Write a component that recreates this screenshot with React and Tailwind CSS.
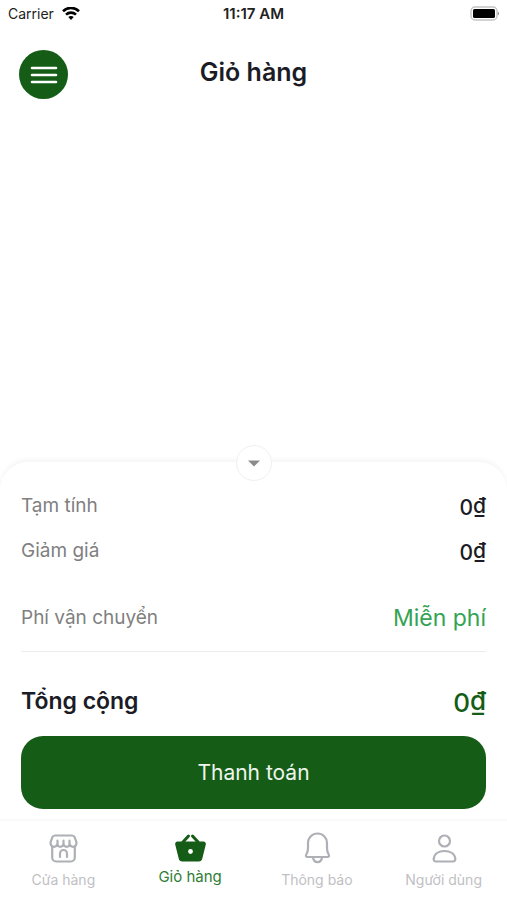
import React from "react";

function StatusBar() {
  return (
    <div className="grid h-7 grid-cols-3 items-center px-2 text-sm leading-5 text-[#222]">
      <div className="flex items-center gap-2">
        <span>Carrier</span>
        <svg width="18" height="14" viewBox="0 0 18 14" fill="none" stroke="#000" strokeWidth="2.6" aria-hidden="true">
          <path d="M1 4.2C5.5-.2 12.5-.2 17 4.2" />
          <path d="M4 7.600C6.800 4.900 11.200 4.900 14 7.600" />
          <path d="M9 13 6.300 10.100C7.800 8.600 10.200 8.600 11.700 10.100Z" fill="#000" stroke="none" />
        </svg>
      </div>
      <span className="text-center text-[15px] font-semibold">11:17 AM</span>
      <svg className="justify-self-end" width="30" height="16" viewBox="0 0 30 16" aria-hidden="true">
        <rect x="2" y="1" width="26" height="13" rx="4" fill="#fff" stroke="#c4c4c4" strokeWidth="1.4" />
        <rect x="4" y="3" width="22" height="9" rx="1.5" fill="#000" />
        <path d="M28.8 5.5v4l1.2-1v-2z" fill="#999" />
      </svg>
    </div>
  );
}

function Header() {
  return (
    <header className="grid grid-cols-[49px_1fr_49px] items-start px-[19px] pt-[22px]">
      <button type="button" aria-label="Menu" className="flex size-[49px] items-center justify-center rounded-full bg-[#155d17]">
        <svg width="28" height="20" viewBox="0 0 28 20" stroke="#fff" strokeWidth="2.6" strokeLinecap="round" aria-hidden="true">
          <path d="M2 3h24M2 10h24M2 17h24" />
        </svg>
      </button>
      <h1 className="pt-1 text-center text-[25px] leading-9 font-semibold text-[#1b1c26]">Giỏ hàng</h1>
    </header>
  );
}

function Row({ label, children }) {
  return (
    <div className="flex h-[45px] items-center justify-between">
      <dt className="text-[19px] text-[#808080]">{label}</dt>
      {children}
    </div>
  );
}

function Price({ amount }) {
  return (
    <>
      {amount}
      <span className="align-[2px]">₫</span>
    </>
  );
}

const iconProps = { width: 34, height: 34, viewBox: "0 0 34 34", fill: "none", strokeWidth: 2.2, strokeLinecap: "round", strokeLinejoin: "round", "aria-hidden": true };

function StoreIcon() {
  return (
    <svg {...iconProps} stroke="#aeb0b6">
      <path d="M6.200 15v11.500a4 4 0 0 0 4 4h14.600a4 4 0 0 0 4-4V15" />
      <path d="M9 4.500h17a3 3 0 0 1 2.700 1.800l1.700 4.700v1.500a3.400 3.400 0 0 1-6.500 1.300 3.500 3.500 0 0 1-6.400 0 3.500 3.500 0 0 1-6.400 0A3.400 3.400 0 0 1 4.600 12.500V11l1.700-4.700A3 3 0 0 1 9 4.500Z" />
      <path d="M11.500 9.500v4.300M17.500 9.500v4.300M23.500 9.500v4.300M14 26v-3.500a3.500 3.500 0 0 1 7 0V26" />
    </svg>
  );
}

function BasketIcon() {
  return (
    <svg {...iconProps} stroke="#155d17">
      <path d="m10 11 5.500-6M25 11l-5.500-6" strokeWidth="3" />
      <path d="M4.500 10.500h26a2.400 2.400 0 0 1 2.300 3l-3.500 14a3.800 3.800 0 0 1-3.600 3H9.300a3.800 3.800 0 0 1-3.600-3L2.200 13.500a2.400 2.400 0 0 1 2.300-3Z" fill="#155d17" stroke="none" />
      <circle cx="17.500" cy="20.500" r="2.400" fill="#fff" stroke="none" />
    </svg>
  );
}

function BellIcon() {
  return (
    <svg {...iconProps} stroke="#aeb0b6">
      <path d="M8 17v-5a9.500 9.500 0 0 1 19 0v5c0 3 .5 4.600 1.700 6.500.8 1.200.2 2.500-1.200 2.500h-20c-1.400 0-2-1.300-1.200-2.500C7.500 21.600 8 20 8 17Z" />
      <path d="M13 26.500c.5 3 2 4.700 4.500 4.700s4-1.700 4.500-4.700" />
    </svg>
  );
}

function UserIcon() {
  return (
    <svg {...iconProps} stroke="#aeb0b6">
      <circle cx="17.500" cy="10" r="5.500" />
      <path d="M6.700 28C7.100 23 11.500 20 17.500 20s10.400 3 10.800 8a2.200 2.200 0 0 1-2.400 2.500H9.100A2.200 2.200 0 0 1 6.700 28Z" />
    </svg>
  );
}

const tabs = [
  { label: "Cửa hàng", Icon: StoreIcon },
  { label: "Giỏ hàng", Icon: BasketIcon, active: true },
  { label: "Thông báo", Icon: BellIcon },
  { label: "Người dùng", Icon: UserIcon },
];

function TabBar() {
  return (
    <nav className="grid h-[81px] grid-cols-4 border-t-2 border-[#f9f9f9] bg-white pt-[10px]">
      {tabs.map(({ label, Icon, active }) => (
        <a key={label} href="#" aria-current={active ? "page" : undefined} className={active ? "flex flex-col items-center gap-[2px] text-[15px] leading-5 text-[#2f7d36]" : "flex flex-col items-center gap-[5px] text-sm leading-5 text-[#bfc0c4]"}>
          <Icon />
          <span>{label}</span>
        </a>
      ))}
    </nav>
  );
}

export default function App() {
  return (
    <div className="flex min-h-screen flex-col bg-white font-['Inter','Noto_Sans',sans-serif]">
      <StatusBar />
      <Header />
      <main className="flex flex-1 flex-col justify-end">
        <section aria-label="Giỏ hàng" className="relative rounded-t-[28px] bg-white px-[21px] pt-[22px] pb-[10px] shadow-[0_-3px_4px_rgba(0,0,0,0.04)]">
          <button type="button" aria-label="Thu gọn" className="absolute -top-[17px] left-1/2 flex size-9 -translate-x-1/2 items-center justify-center rounded-full border border-[#f0f0f0] bg-white">
            <svg width="12" height="7" viewBox="0 0 12 7" aria-hidden="true">
              <path d="M0 .5h12L6 6.500Z" fill="#8b8b8b" />
            </svg>
          </button>
          <dl>
            <Row label="Tạm tính">
              <dd className="text-[21px] font-medium text-[#1b1c26]"><Price amount="0" /></dd>
            </Row>
            <Row label="Giảm giá">
              <dd className="text-[21px] font-medium text-[#1b1c26]"><Price amount="0" /></dd>
            </Row>
            <div className="mt-[22px] border-b border-[#ececec] pb-[10px]">
              <Row label="Phí vận chuyển">
                <dd className="text-[23px] text-[#34a353]">Miễn phí</dd>
              </Row>
            </div>
            <div className="mt-6 flex h-[50px] items-center justify-between">
              <dt className="text-[23px] font-semibold text-[#1b1c26]">Tổng cộng</dt>
              <dd className="text-[26px] font-medium text-[#155d17]"><Price amount="0" /></dd>
            </div>
          </dl>
          <button type="button" className="mt-[10px] h-[73px] w-full rounded-[22px] bg-[#155d17] text-[21px] text-[#eef5ee]">
            Thanh toán
          </button>
        </section>
      </main>
      <TabBar />
    </div>
  );
}
